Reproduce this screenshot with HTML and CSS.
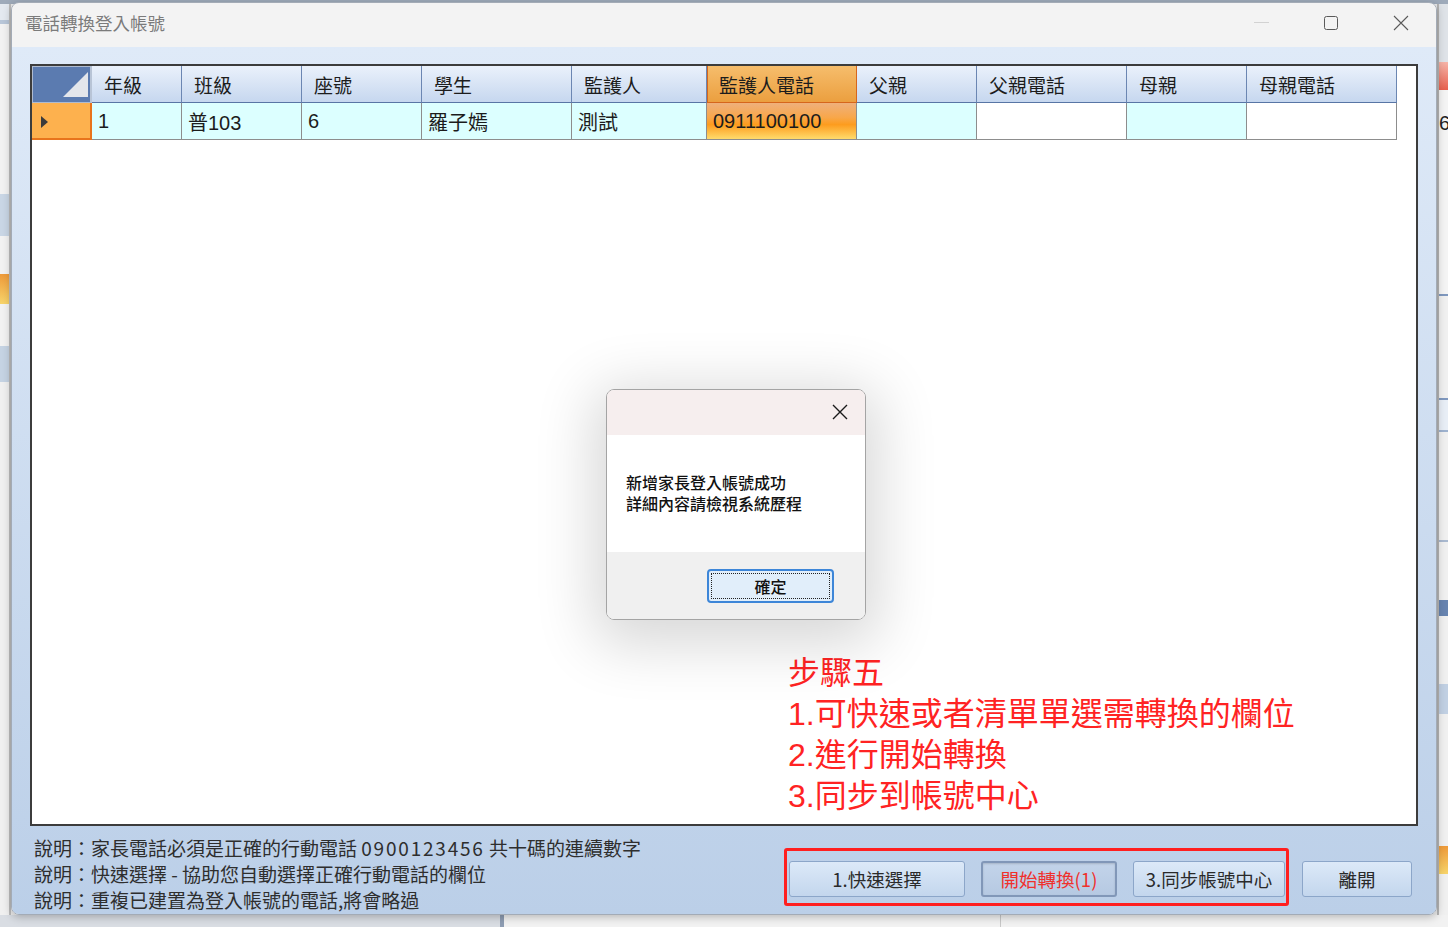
FILE: index.html
```html
<!DOCTYPE html>
<html lang="zh-Hant">
<head>
  <meta charset="UTF-8" />
  <title>電話轉換登入帳號</title>
  <link rel="stylesheet" href="styles.css">
</head>
<body>
  <!-- app behind the dialog window -->
  <div class="desk-top"></div>
  <div class="desk-left"></div>
  <div class="desk-right"><span class="desk-num">6</span></div>
  <div class="desk-bottom"></div>

  <div class="window">
    <div class="titlebar">
      <div class="title">電話轉換登入帳號</div>
      <div class="win-controls">
        <span class="ctl"><span class="ctl-min"></span></span>
        <span class="ctl">
          <svg width="16" height="16" viewBox="0 0 16 16"><rect x="1.5" y="1.5" width="13" height="13" rx="2" fill="none" stroke="#5a5a5a" stroke-width="1"/></svg>
        </span>
        <span class="ctl">
          <svg width="16" height="16" viewBox="0 0 16 16"><path d="M1 1L15 15M15 1L1 15" stroke="#5a5a5a" stroke-width="1.1" fill="none"/></svg>
        </span>
      </div>
    </div>

    <div class="client">
      <div class="grid-box">
        <table class="grid">
          <colgroup>
            <col style="width:60px"><col style="width:90px"><col style="width:120px"><col style="width:120px">
            <col style="width:150px"><col style="width:135px"><col style="width:150px"><col style="width:120px">
            <col style="width:150px"><col style="width:120px"><col style="width:150px">
          </colgroup>
          <thead>
            <tr>
              <th class="corner">
                <svg width="58" height="35" viewBox="0 0 58 35"><polygon points="30,30 55,30 55,5" fill="#e3e6eb"/></svg>
              </th>
              <th>年級</th>
              <th>班級</th>
              <th>座號</th>
              <th>學生</th>
              <th>監護人</th>
              <th class="sel">監護人電話</th>
              <th>父親</th>
              <th>父親電話</th>
              <th>母親</th>
              <th>母親電話</th>
            </tr>
          </thead>
          <tbody>
            <tr>
              <td class="row-head">
                <svg width="20" height="35" viewBox="0 0 20 35"><polygon points="9,13 16,19 9,25" fill="#3b3b3b"/></svg>
              </td>
              <td class="cyan">1</td>
              <td class="cyan">普103</td>
              <td class="cyan">6</td>
              <td class="cyan">羅子嫣</td>
              <td class="cyan">測試</td>
              <td class="sel">0911100100</td>
              <td class="cyan"></td>
              <td></td>
              <td class="cyan"></td>
              <td></td>
            </tr>
          </tbody>
        </table>

        <div class="note">
          <div>步驟五</div>
          <div>1.可快速或者清單單選需轉換的欄位</div>
          <div>2.進行開始轉換</div>
          <div>3.同步到帳號中心</div>
        </div>
      </div>

      <div class="bottom">
        <div class="help">
          <div>說明：家長電話必須是正確的行動電話 <span class="digits">0900123456</span> 共十碼的連續數字</div>
          <div>說明：快速選擇 - 協助您自動選擇正確行動電話的欄位</div>
          <div>說明：重複已建置為登入帳號的電話,將會略過</div>
        </div>
        <div class="actions">
          <div class="steps">
            <button class="btn btn-quick">1.快速選擇</button>
            <button class="btn btn-start">開始轉換(1)</button>
            <button class="btn btn-sync">3.同步帳號中心</button>
          </div>
          <button class="btn btn-exit">離開</button>
        </div>
      </div>
    </div>
  </div>

  <!-- message box -->
  <div class="dialog">
    <div class="dialog-head">
      <svg width="16" height="16" viewBox="0 0 16 16"><path d="M1 1L15 15M15 1L1 15" stroke="#1a1a1a" stroke-width="1.4" fill="none"/></svg>
    </div>
    <div class="dialog-body">
      <div>新增家長登入帳號成功</div>
      <div>詳細內容請檢視系統歷程</div>
    </div>
    <div class="dialog-foot">
      <button class="ok-btn">確定</button>
    </div>
  </div>
</body>
</html>
```

FILE: styles.css
```css
:root {
  --ui-font: "Noto Sans CJK TC", "Noto Sans", sans-serif;
  --num-font: "Liberation Sans", "Noto Sans CJK TC", sans-serif;
  --head-line: #6b86b2;
  --cell-line: #8d8d8d;
  --cyan: #dcffff;
}
* { box-sizing: border-box; margin: 0; padding: 0; }
body {
  width: 1448px; height: 927px;
  overflow: hidden;
  position: relative;
  background: #ececec;
  font-family: var(--ui-font);
}

/* background app */
.desk-top { position: absolute; left: 0; top: 0; width: 100%; height: 4px; background: #9eaaba; }
.desk-left {
  position: absolute; left: 0; top: 4px; width: 11px; height: 923px;
  background: linear-gradient(to bottom,
    #e4e9f0 0, #e4e9f0 16px, #b8c6d8 16px, #b8c6d8 20px, #f2f2f2 20px,
    #f2f2f2 190px, #c9d6e5 190px, #c9d6e5 232px, #f2f2f2 232px,
    #f2f2f2 270px, #ee9a3a 270px, #f7d46a 300px, #f2f2f2 300px,
    #f2f2f2 342px, #c5d3e3 342px, #c5d3e3 378px, #f0f0f0 378px);
  border-right: 2px solid #bdbdbd;
}
.desk-right {
  position: absolute; right: 0; top: 4px; width: 11px; height: 923px;
  background: linear-gradient(to bottom,
    #dfe3e8 0, #dfe3e8 58px, #f6b4a8 58px, #e8604e 86px, #f4f4f4 86px,
    #f4f4f4 290px, #7f98be 290px, #7f98be 292px, #f0f0f0 292px,
    #f0f0f0 394px, #7f98be 394px, #7f98be 396px, #e8eef6 396px,
    #e8eef6 426px, #9eb2cf 426px, #9eb2cf 428px, #f0f0f0 428px,
    #f0f0f0 536px, #a9b9d0 536px, #a9b9d0 538px, #f0f0f0 538px,
    #f0f0f0 596px, #6784b0 596px, #6784b0 612px, #f0f0f0 612px,
    #f0f0f0 680px, #c1d0e3 680px, #c1d0e3 710px, #f0f0f0 710px,
    #f0f0f0 842px, #ee9a3a 842px, #f7d46a 870px, #f0f0f0 870px);
  border-left: 2px solid #b5b5b5;
}
.desk-num { display: block; padding-top: 108px; font-family: var(--num-font); font-size: 20px; color: #222; }
.desk-bottom {
  position: absolute; left: 0; bottom: 0; width: 100%; height: 12px;
  background: linear-gradient(to right,
    #d9dde3 0, #d9dde3 500px, #8e9db3 500px, #8e9db3 504px, #f2f2f2 504px,
    #f2f2f2 1000px, #c8c8c8 1000px, #c8c8c8 1001px, #f2f2f2 1001px);
}

/* main window */
.window {
  position: absolute; left: 11px; top: 2px;
  width: 1426px; height: 913px;
  border: 1px solid #a3abb6;
  border-radius: 8px;
  overflow: hidden;
  box-shadow: 0 2px 8px rgba(0,0,0,0.25);
  display: flex; flex-direction: column;
}
.titlebar {
  height: 44px; flex: none;
  background: #f3f3f3;
  display: flex; align-items: center; justify-content: space-between;
  padding-left: 13px; padding-bottom: 5px;
}
.title { font-size: 17.5px; color: #7b7b7b; }
.win-controls { display: flex; height: 100%; align-self: stretch; }
.ctl { width: 70px; display: flex; align-items: center; justify-content: center; }
.ctl-min { width: 15px; height: 1px; background: #d2d2d2; }

.client {
  flex: 1;
  display: flex; flex-direction: column;
  padding: 17px 18px 0;
  background: linear-gradient(to bottom, #dfeaf8, #bbcfe8);
}
.grid-box {
  height: 762px; flex: none;
  position: relative;
  background: #fff;
  border: 2px solid #3c3c3c;
}

/* data grid */
.grid { border-collapse: separate; border-spacing: 0; table-layout: fixed; width: 1365px; }
.grid th, .grid td {
  text-align: left; white-space: nowrap; overflow: hidden;
  font-weight: normal; color: #1c1c1c;
}
.grid thead tr { height: 37px; }
.grid tbody tr { height: 36px; }
.grid th {
  font-size: 19px; padding-left: 12px;
  background: linear-gradient(to bottom, #eaf1fb, #c6d7ef);
  border-right: 1px solid var(--head-line);
  border-bottom: 1px solid #5875a5;
}
.grid th.corner {
  padding: 0;
  background: #5b7bb0;
  border: 1px solid #aebbd0;
  border-right: 2px solid #b8c4d6;
}
.grid th.corner svg, .grid td.row-head svg { display: block; }
.grid th.sel {
  background: linear-gradient(to bottom, #f6bd6c, #eb9f3f);
  border-right: 1px solid #d6661c;
  border-left: 1px solid #d6661c;
  border-bottom: 1px solid #d6661c;
  padding-left: 11px;
}
.grid td {
  font-family: var(--num-font);
  font-size: 20px; padding-left: 6px;
  border-right: 1px solid var(--cell-line);
  border-bottom: 1px solid var(--cell-line);
}
.grid td.cyan { background: var(--cyan); }
.grid td.row-head {
  padding: 0;
  background: #fdb14e;
  border-right: 2px solid #e8741c;
  border-bottom: 2px solid #e8741c;
}
.grid td.sel {
  background: linear-gradient(to bottom, #efb07c 0, #f8a74a 40%, #fd9c1e 60%, #fedb6c 100%);
}

.note {
  position: absolute; left: 756px; top: 587px;
  font-family: var(--num-font);
  color: #ff2323;
  font-size: 32px; line-height: 41px;
}

/* bottom bar */
.bottom { flex: 1; display: flex; justify-content: space-between; }
.help {
  margin-left: 4px; padding-top: 9px;
  font-size: 19px; line-height: 26px; color: #2e2e2e;
  white-space: nowrap;
}
.help .digits { letter-spacing: 1.8px; }
.actions { display: flex; align-items: flex-start; margin-top: 22px; margin-right: 6px; }
.steps {
  display: flex; gap: 16px;
  border: 3px solid #ff1f1f; border-radius: 3px;
  padding: 10px 1px 6px 2px;
}
.btn {
  height: 36px;
  font-family: var(--ui-font); font-size: 18.5px; color: #2a2a2a;
  background: linear-gradient(to bottom, #dce9f8, #c3d6ed);
  border: 1px solid #8ca6c9; border-radius: 3px;
  cursor: pointer;
}
.btn-quick { width: 176px; }
.btn-start {
  width: 136px; color: #f0302c;
  background: linear-gradient(to bottom, #c3d4ea, #b6c9e2);
  border: 2px solid #8197b8;
  box-shadow: inset 0 1px 2px rgba(0,0,0,0.15);
}
.btn-sync { width: 152px; }
.btn-exit { width: 110px; margin-left: 13px; margin-top: 13px; }

/* message box */
.dialog {
  position: absolute; left: 606px; top: 389px;
  width: 260px; height: 231px;
  border: 1px solid #a4a4a4; border-radius: 8px;
  overflow: hidden;
  display: flex; flex-direction: column;
  box-shadow: 0 12px 60px 12px rgba(0,0,0,0.16);
}
.dialog-head {
  height: 45px; background: #f6eeee;
  display: flex; align-items: center; justify-content: flex-end;
  padding-right: 17px; padding-bottom: 2px;
}
.dialog-body {
  height: 117px; background: #fff;
  display: flex; flex-direction: column; justify-content: center;
  padding-left: 19px;
  font-family: var(--num-font);
  font-size: 16px; line-height: 21px; color: #111; font-weight: 500;
}
.dialog-foot { flex: 1; background: #f0f0f0; padding: 17px 0 0 100px; }
.ok-btn {
  width: 127px; height: 34px;
  font-family: var(--ui-font); font-size: 16px; font-weight: 500; color: #111;
  background: #e1eefa;
  border: 2px solid #3d86d8; border-radius: 4px;
  outline: 1px dotted #222; outline-offset: -5px;
}
```
